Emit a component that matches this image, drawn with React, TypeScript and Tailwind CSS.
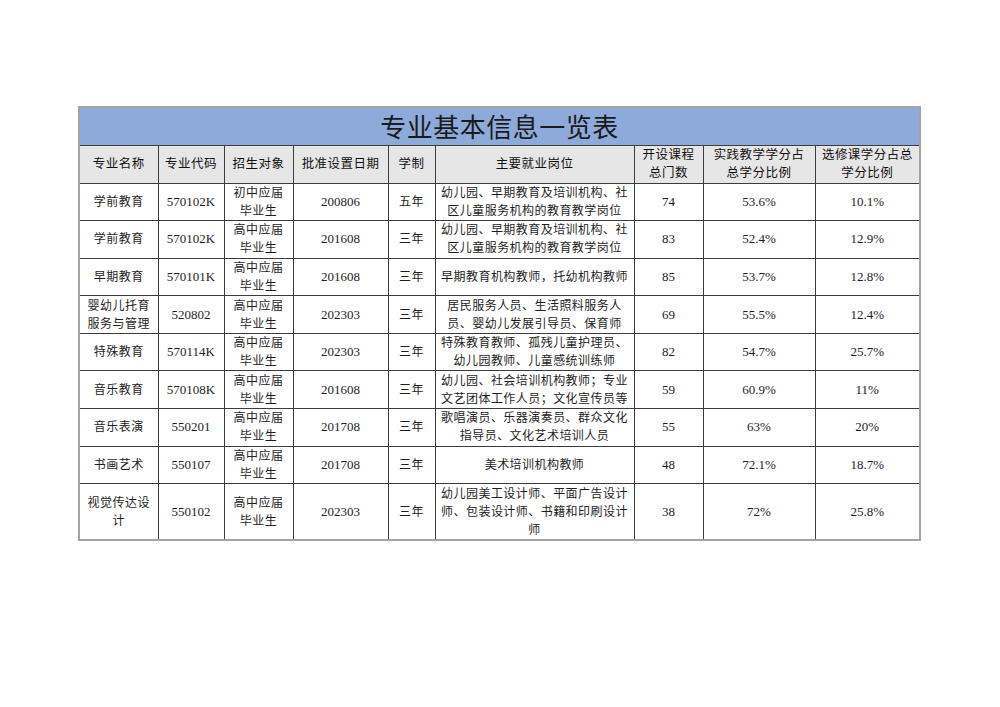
import React from "react";

type Row = {
  name: string[];
  code: string;
  target: string[];
  date: string;
  years: string;
  jobs: string[];
  courses: string;
  practice: string;
  elective: string;
  tall?: boolean;
};

const rows: Row[] = [
  {
    name: ["学前教育"],
    code: "570102K",
    target: ["初中应届", "毕业生"],
    date: "200806",
    years: "五年",
    jobs: ["幼儿园、早期教育及培训机构、社", "区儿童服务机构的教育教学岗位"],
    courses: "74",
    practice: "53.6%",
    elective: "10.1%",
  },
  {
    name: ["学前教育"],
    code: "570102K",
    target: ["高中应届", "毕业生"],
    date: "201608",
    years: "三年",
    jobs: ["幼儿园、早期教育及培训机构、社", "区儿童服务机构的教育教学岗位"],
    courses: "83",
    practice: "52.4%",
    elective: "12.9%",
  },
  {
    name: ["早期教育"],
    code: "570101K",
    target: ["高中应届", "毕业生"],
    date: "201608",
    years: "三年",
    jobs: ["早期教育机构教师，托幼机构教师"],
    courses: "85",
    practice: "53.7%",
    elective: "12.8%",
  },
  {
    name: ["婴幼儿托育", "服务与管理"],
    code: "520802",
    target: ["高中应届", "毕业生"],
    date: "202303",
    years: "三年",
    jobs: ["居民服务人员、生活照料服务人", "员、婴幼儿发展引导员、保育师"],
    courses: "69",
    practice: "55.5%",
    elective: "12.4%",
  },
  {
    name: ["特殊教育"],
    code: "570114K",
    target: ["高中应届", "毕业生"],
    date: "202303",
    years: "三年",
    jobs: ["特殊教育教师、孤残儿童护理员、", "幼儿园教师、儿童感统训练师"],
    courses: "82",
    practice: "54.7%",
    elective: "25.7%",
  },
  {
    name: ["音乐教育"],
    code: "570108K",
    target: ["高中应届", "毕业生"],
    date: "201608",
    years: "三年",
    jobs: ["幼儿园、社会培训机构教师；专业", "文艺团体工作人员；文化宣传员等"],
    courses: "59",
    practice: "60.9%",
    elective: "11%",
  },
  {
    name: ["音乐表演"],
    code: "550201",
    target: ["高中应届", "毕业生"],
    date: "201708",
    years: "三年",
    jobs: ["歌唱演员、乐器演奏员、群众文化", "指导员、文化艺术培训人员"],
    courses: "55",
    practice: "63%",
    elective: "20%",
  },
  {
    name: ["书画艺术"],
    code: "550107",
    target: ["高中应届", "毕业生"],
    date: "201708",
    years: "三年",
    jobs: ["美术培训机构教师"],
    courses: "48",
    practice: "72.1%",
    elective: "18.7%",
  },
  {
    name: ["视觉传达设", "计"],
    code: "550102",
    target: ["高中应届", "毕业生"],
    date: "202303",
    years: "三年",
    jobs: ["幼儿园美工设计师、平面广告设计", "师、包装设计师、书籍和印刷设计", "师"],
    courses: "38",
    practice: "72%",
    elective: "25.8%",
    tall: true,
  },
];

const headers: string[][] = [
  ["专业名称"],
  ["专业代码"],
  ["招生对象"],
  ["批准设置日期"],
  ["学制"],
  ["主要就业岗位"],
  ["开设课程", "总门数"],
  ["实践教学学分占", "总学分比例"],
  ["选修课学分占总", "学分比例"],
];

const cell = "border border-[#3c3c3c] text-center align-middle p-0";

function Lines({ lines }: { lines: string[] }) {
  return (
    <>
      {lines.map((l, i) => (
        <div key={i} className="whitespace-nowrap">
          {l}
        </div>
      ))}
    </>
  );
}

export default function App() {
  return (
    <div className="min-h-[707px] w-[1000px] bg-white pt-[106px] pl-[78px]">
      <table
        className="table-fixed border-collapse border-2 border-[#a3a3a3] text-[#1e1e1e] text-[12px] leading-[18px] tracking-[0.45px]"
        style={{ fontFamily: '"Liberation Serif", "Noto Sans CJK SC", serif', width: 841 }}
      >
        <colgroup>
          <col className="w-[79px]" />
          <col className="w-[66px]" />
          <col className="w-[69px]" />
          <col className="w-[95px]" />
          <col className="w-[47px]" />
          <col className="w-[199px]" />
          <col className="w-[69px]" />
          <col className="w-[112px]" />
          <col className="w-[105px]" />
        </colgroup>
        <thead>
          <tr className="h-[38px] bg-[#8eaadb]">
            <th
              colSpan={9}
              className="border border-[#3c3c3c] p-0 text-center align-middle text-[26px] font-normal leading-[36px] tracking-[0.5px] text-[#1a1a1a]"
              style={{ fontFamily: '"Noto Sans CJK SC", sans-serif' }}
            >
              专业基本信息一览表
            </th>
          </tr>
          <tr className="h-[38px] bg-[#e7e6e6]">
            {headers.map((h, i) => (
              <th key={i} className={cell + " font-normal text-[12.5px] text-[#111]"}>
                <Lines lines={h} />
              </th>
            ))}
          </tr>
        </thead>
        <tbody>
          {rows.map((r, i) => (
            <tr key={i} className={r.tall ? "h-[56px]" : "h-[37.6px]"}>
              <td className={cell}>
                <Lines lines={r.name} />
              </td>
              <td className={cell + " text-[13px] tracking-normal"}>{r.code}</td>
              <td className={cell}>
                <Lines lines={r.target} />
              </td>
              <td className={cell + " text-[13px] tracking-normal"}>{r.date}</td>
              <td className={cell}>{r.years}</td>
              <td className={cell}>
                <Lines lines={r.jobs} />
              </td>
              <td className={cell + " text-[13px] tracking-normal"}>{r.courses}</td>
              <td className={cell + " text-[13px] tracking-normal"}>{r.practice}</td>
              <td className={cell + " text-[13px] tracking-normal"}>{r.elective}</td>
            </tr>
          ))}
        </tbody>
      </table>
    </div>
  );
}
